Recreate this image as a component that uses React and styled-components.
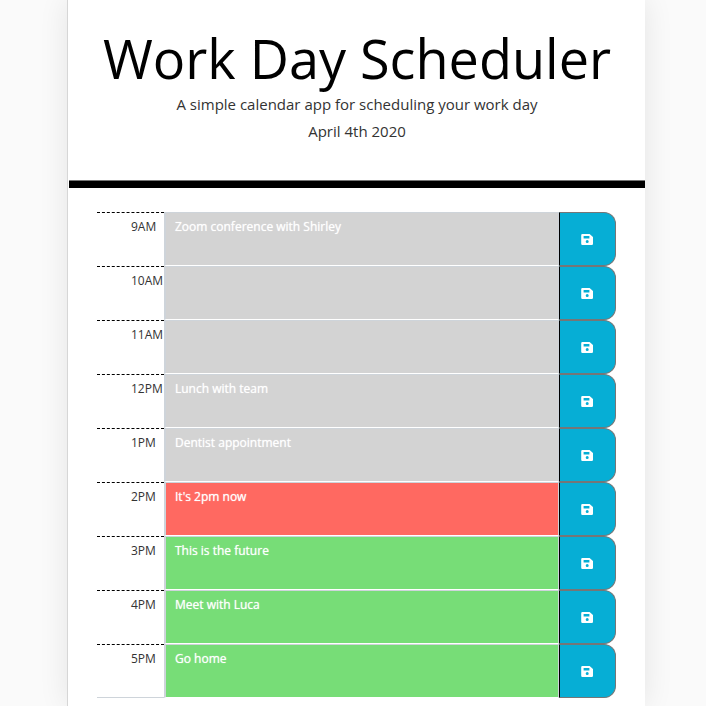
import React, { useState } from "react";
import styled, { createGlobalStyle } from "styled-components";

const GlobalStyle = createGlobalStyle`
  *, *::before, *::after { box-sizing: border-box; }
  body {
    margin: 0;
    background: #fafafa;
    color: #000;
    font-family: "Open Sans", sans-serif;
    font-weight: 400;
    overflow: hidden;
  }
`;

const Page = styled.div`
  display: flex;
  min-height: 100vh;
  padding: 0 61px 0 67px;
`;

const Planner = styled.main`
  flex: 1;
  min-width: 0;
  background: #fff;
  border-left: 1px solid #d6d6d6;
  box-shadow: 0 0 28px rgba(0, 0, 0, 0.09);
`;

const Header = styled.header`
  padding: 26px 16px 36px;
  margin-left: 1px;
  border-bottom: 7px solid #000;
  box-shadow: inset 0 -1px #777;
  text-align: center;
`;

const Title = styled.h1`
  margin: 0;
  font-size: 54px;
  font-weight: 400;
  line-height: 65px;
  white-space: nowrap;
`;

const Lead = styled.p`
  margin: 0;
  color: #333;
  font-size: 15px;
  line-height: 27px;
`;

const Schedule = styled.section`
  padding: 24px 29px 8px;
`;

const Block = styled.form`
  display: grid;
  grid-template-columns: 67px 1fr 57px;
  height: 54px;

  &:last-child > label {
    border-bottom: 1px solid #ced4da;
  }
`;

const Hour = styled.label`
  padding: 5px 0 0 34px;
  border-top: 1px dashed #000;
  color: #333;
  font-size: 12px;
  line-height: 18px;
  white-space: nowrap;
`;

const fills = { past: "#d3d3d3", present: "#ff6961", future: "#77dd77" };

const Entry = styled.textarea`
  width: 100%;
  height: 100%;
  margin: 0;
  padding: 5px 9px;
  border: 1px solid #ced4da;
  border-left-width: 2px;
  border-bottom-color: #fff;
  border-radius: 0;
  outline: none;
  resize: none;
  overflow: hidden;
  background: ${({ $phase }) => fills[$phase]};
  color: #fff;
  font-family: inherit;
  font-size: 12px;
  font-weight: 500;
  line-height: 18px;
  text-shadow: 0 0 1px rgba(255, 255, 255, 0.8);
`;

const SaveButton = styled.button`
  display: flex;
  align-items: center;
  justify-content: center;
  padding: 1px 1px 0 0;
  border: 1px solid #767676;
  border-left-color: #000;
  border-radius: 0 12px 12px 0;
  background: #06aed5;
  color: #fff;
  cursor: pointer;
`;

function SaveIcon() {
  return (
    <svg width="12" height="12" viewBox="0 0 12 12" aria-hidden="true">
      <path
        fill="currentColor"
        fillRule="evenodd"
        d="M1.4 0H8.6L12 3V9.8a1.2 1.2 0 0 1-1.2 1.2H1.4A1.2 1.2 0 0 1 .2 9.8V1.2A1.2 1.2 0 0 1 1.4 0ZM2.6 2V4.6H8.4V2ZM6.2 6a1.5 1.5 0 1 0 0 3 1.5 1.5 0 0 0 0-3Z"
      />
    </svg>
  );
}

const slots = [
  { hour: "9AM", text: "Zoom conference with Shirley", phase: "past" },
  { hour: "10AM", text: "", phase: "past" },
  { hour: "11AM", text: "", phase: "past" },
  { hour: "12PM", text: "Lunch with team", phase: "past" },
  { hour: "1PM", text: "Dentist appointment", phase: "past" },
  { hour: "2PM", text: "It's 2pm now", phase: "present" },
  { hour: "3PM", text: "This is the future", phase: "future" },
  { hour: "4PM", text: "Meet with Luca", phase: "future" },
  { hour: "5PM", text: "Go home", phase: "future" },
];

function TimeBlock({ hour, text, phase }) {
  const [value, setValue] = useState(text);
  const id = `slot-${hour}`;
  return (
    <Block onSubmit={(e) => e.preventDefault()}>
      <Hour htmlFor={id}>{hour}</Hour>
      <Entry
        id={id}
        $phase={phase}
        spellCheck={false}
        value={value}
        onChange={(e) => setValue(e.target.value)}
      />
      <SaveButton type="submit" aria-label={`Save ${hour}`}>
        <SaveIcon />
      </SaveButton>
    </Block>
  );
}

export default function App() {
  return (
    <>
      <GlobalStyle />
      <Page>
        <Planner>
          <Header>
            <Title>Work Day Scheduler</Title>
            <Lead>A simple calendar app for scheduling your work day</Lead>
            <Lead>April 4th 2020</Lead>
          </Header>
          <Schedule>
            {slots.map((slot) => (
              <TimeBlock key={slot.hour} {...slot} />
            ))}
          </Schedule>
        </Planner>
      </Page>
    </>
  );
}
